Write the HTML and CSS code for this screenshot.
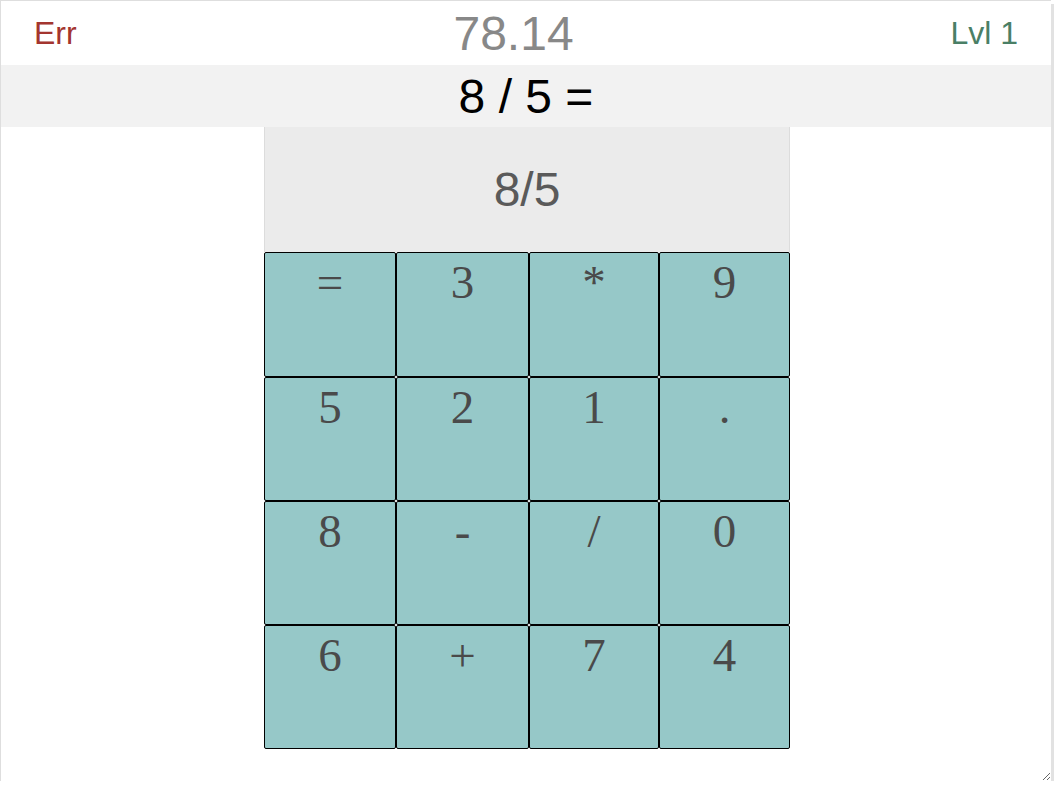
FILE: index.html
```html
<!DOCTYPE html>
<html>
<head>
<meta charset="utf-8">
<link rel="stylesheet" href="styles.css">
</head>
<body>
<div class="frame">
  <header class="top">
    <span class="err">Err</span>
    <span class="timer">78.14</span>
    <span class="level">Lvl 1</span>
  </header>
  <div class="question">8 / 5 =</div>
  <div class="calc">
    <div class="display">8/5</div>
    <div class="keys">
      <div class="key">=</div>
      <div class="key">3</div>
      <div class="key">*</div>
      <div class="key">9</div>
      <div class="key">5</div>
      <div class="key">2</div>
      <div class="key">1</div>
      <div class="key">.</div>
      <div class="key">8</div>
      <div class="key">-</div>
      <div class="key">/</div>
      <div class="key">0</div>
      <div class="key">6</div>
      <div class="key">+</div>
      <div class="key">7</div>
      <div class="key">4</div>
    </div>
  </div>
</div>
</body>
</html>
```

FILE: styles.css
```css
html, body {
  margin: 0;
  padding: 0;
  background: #fff;
}

.frame {
  box-sizing: border-box;
  width: 1051px;
  height: 781px;
  border: 1px solid #dedede;
  border-right: none;
  border-bottom: none;
  box-shadow: 3px 4px 0 #e2e2e2;
  background: #fff;
  resize: both;
  overflow: hidden;
  font-family: "Liberation Sans", Arial, sans-serif;
}

.top {
  height: 64px;
  display: flex;
  justify-content: space-between;
  align-items: center;
  padding: 0 33px 0 33px;
}

.err {
  color: #a3352f;
  font-size: 32px;
}

.timer {
  color: #888;
  font-size: 48px;
}

.level {
  color: #4a7f66;
  font-size: 32px;
}

.question {
  height: 62px;
  background: #f2f2f2;
  color: #000;
  font-size: 48px;
  display: flex;
  align-items: center;
  justify-content: center;
}

.calc {
  width: 526px;
  margin: 0 0 0 263px;
}

.display {
  box-sizing: border-box;
  height: 125px;
  background: #ebebeb;
  border-left: 1px solid #dcdcdc;
  border-right: 1px solid #dcdcdc;
  color: #5a5a5a;
  font-size: 48px;
  display: flex;
  align-items: center;
  justify-content: center;
}

.keys {
  display: grid;
  grid-template-columns: 132px 133px 130px 131px;
  grid-template-rows: 125px 124px 124px 124px;
}

.key {
  box-sizing: border-box;
  background: #96c8c8;
  border: 1px solid #000;
  border-radius: 2px;
  color: #4a4a4a;
  font-family: "Liberation Serif", "Times New Roman", serif;
  font-size: 47px;
  text-align: center;
  padding-top: 2px;
}
```
